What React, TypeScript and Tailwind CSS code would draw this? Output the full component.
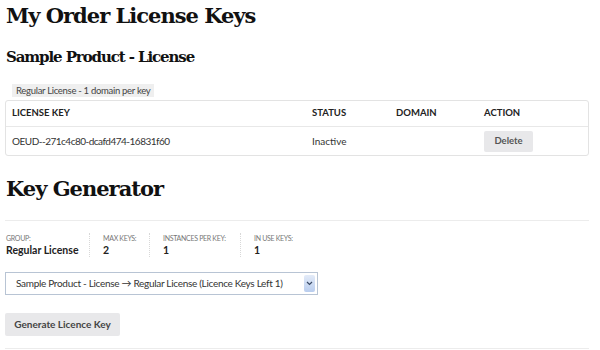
export default function App() {
  const stats = [
    { label: 'Group:', value: 'Regular License', w: 'w-[84px]' },
    { label: 'Max Keys:', value: '2', w: 'w-[60px]' },
    { label: 'Instances per key:', value: '1', w: 'w-[91px]' },
    { label: 'In use keys:', value: '1', w: 'w-[80px]' },
  ];

  return (
    <div className="w-[600px] h-[350px] overflow-hidden bg-white px-[5px] text-[#333] font-['Lato',sans-serif]">
      <h1 className="pt-[3px] pl-px font-['DejaVu_Serif',serif] text-[21px] font-bold leading-[26px] text-[#111] tracking-[-1px]">
        My Order License Keys
      </h1>
      <h2 className="mt-[18px] pl-px font-['DejaVu_Serif',serif] text-[15px] font-bold leading-[20px] text-[#111] tracking-[-1.1px]">
        Sample Product - License
      </h2>

      <div className="mt-[9px] pl-[7px]">
        <span className="inline-block bg-[#efefef] px-[4px] text-[9.5px] leading-[13px] text-[#444] tracking-[-0.3px]">
          Regular License - 1 domain per key
        </span>
      </div>

      <div className="w-[584px] rounded-[3px] border border-[#e3e3e3]">
        <div className="flex h-[26px] items-center border-b border-[#e8e8e8] text-[9.5px] font-bold text-[#222]">
          <div className="w-[306px] pl-[6px]">LICENSE KEY</div>
          <div className="w-[84px]">STATUS</div>
          <div className="w-[88px]">DOMAIN</div>
          <div>ACTION</div>
        </div>
        <div className="flex h-[28px] items-center text-[10px] text-[#333]">
          <div className="w-[306px] pl-[6px] tracking-[-0.5px]">OEUD--271c4c80-dcafd474-16831f60</div>
          <div className="w-[84px]">Inactive</div>
          <div className="w-[88px]"></div>
          <div>
            <button className="h-[21px] w-[49px] rounded-[2px] bg-[#e8e8ea] text-[9.5px] font-bold text-[#555]">
              Delete
            </button>
          </div>
        </div>
      </div>

      <h2 className="mt-[20px] pl-px font-['DejaVu_Serif',serif] text-[21px] font-bold leading-[26px] text-[#111] tracking-[-1px]">
        Key Generator
      </h2>

      <div className="mt-[18px] w-[584px] border-t border-[#ececec]" />

      <div className="mt-[12px] flex pl-px">
        {stats.map((s, i) => (
          <div
            key={s.label}
            className={`${s.w} ${i > 0 ? 'pl-[13px]' : ''} ${i < stats.length - 1 ? 'border-r border-dotted border-[#d8d8d8]' : ''}`}
          >
            <div className="text-[7px] uppercase leading-[10px] text-[#777] tracking-[-0.3px]">{s.label}</div>
            <div className="text-[10.5px] font-bold leading-[14px] text-[#222]">{s.value}</div>
          </div>
        ))}
      </div>

      <div className="mt-[15px] flex h-[23px] w-[313px] items-center border border-[#b8c4d4] bg-white">
        <div className="flex-1 pl-[10px] text-[10px] text-[#333] tracking-[-0.3px] whitespace-nowrap">
          Sample Product - License → Regular License (Licence Keys Left 1)
        </div>
        <div className="mr-[2px] flex h-[17px] w-[11px] items-center justify-center rounded-[2px] bg-gradient-to-b from-[#e3ebf8] to-[#b9cdee]">
          <svg width="7" height="5" viewBox="0 0 7 5">
            <path d="M1 1 L3.5 3.5 L6 1" stroke="#3a4a66" strokeWidth="1.2" fill="none" />
          </svg>
        </div>
      </div>

      <button className="mt-[18px] h-[23px] w-[115px] rounded-[2px] bg-[#e8e8ea] text-[10px] font-bold text-[#444]">
        Generate Licence Key
      </button>

      <div className="mt-[12px] w-[584px] border-t border-[#ececec]" />
    </div>
  );
}
